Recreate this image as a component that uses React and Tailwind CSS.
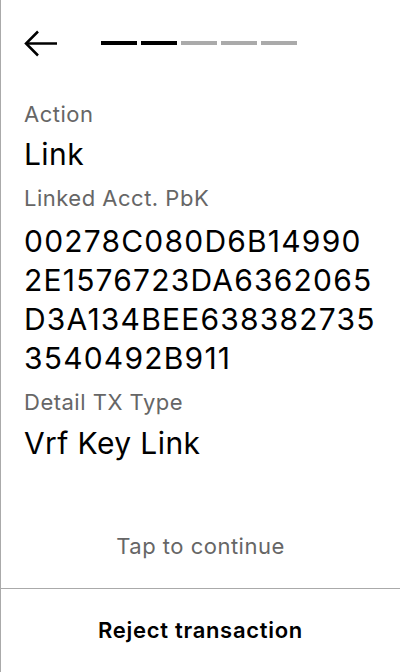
import { ArrowLeft } from 'lucide-react';

const hexLines = ['00278C080D6B14990', '2E1576723DA6362065', 'D3A134BEE638382735', '3540492B911'];

function Progress({ total = 5, done = 2 }) {
  return (
    <div className="flex gap-1">
      {Array.from({ length: total }).map((_, i) => (
        <div key={i} className={`w-9 h-1 ${i < done ? 'bg-black' : 'bg-[#aaaaaa]'}`} />
      ))}
    </div>
  );
}

function Label({ children, className = '' }) {
  return (
    <div className={`text-[22px] leading-[28px] tracking-[0.5px] text-[#666666] ${className}`}>{children}</div>
  );
}

export default function App() {
  return (
    <div
      className="w-[400px] h-[672px] bg-white border-l border-[#aaaaaa] flex flex-col text-black"
      style={{ fontFamily: 'Inter, "Noto Sans", sans-serif' }}
    >
      <div className="flex items-center pt-[30px] pl-[23px] h-[57px]">
        <svg width="33" height="27" viewBox="0 0 33 27" fill="none" stroke="black" strokeWidth="2.5">
          <path d="M33 13.5H2" />
          <path d="M14 1.5L2 13.5L14 25.5" />
        </svg>
        <div className="ml-[44px] -mt-[1px]">
          <Progress />
        </div>
      </div>

      <div className="flex-1 pl-[23px] pt-[43px]">
        <Label>Action</Label>
        <div className="text-[30px] leading-[37px] tracking-[0.4px] mt-[8px]">Link</div>
        <Label className="mt-[11px]">Linked Acct. PbK</Label>
        <div className="text-[30px] leading-[39px] tracking-[1.2px] mt-[10px]">
          {hexLines.map((l) => (
            <div key={l}>{l}</div>
          ))}
        </div>
        <Label className="mt-[10px]">Detail TX Type</Label>
        <div className="text-[30px] leading-[37px] tracking-[0.4px] mt-[9px]">Vrf Key Link</div>
      </div>

      <div className="text-center text-[22px] leading-[28px] tracking-[0.5px] text-[#666666] pb-[28px]">
        Tap to continue
      </div>
      <div className="h-[84px] border-t border-[#aaaaaa] flex items-center justify-center">
        <span className="text-[22px] font-semibold tracking-[0.7px]">Reject transaction</span>
      </div>
    </div>
  );
}
